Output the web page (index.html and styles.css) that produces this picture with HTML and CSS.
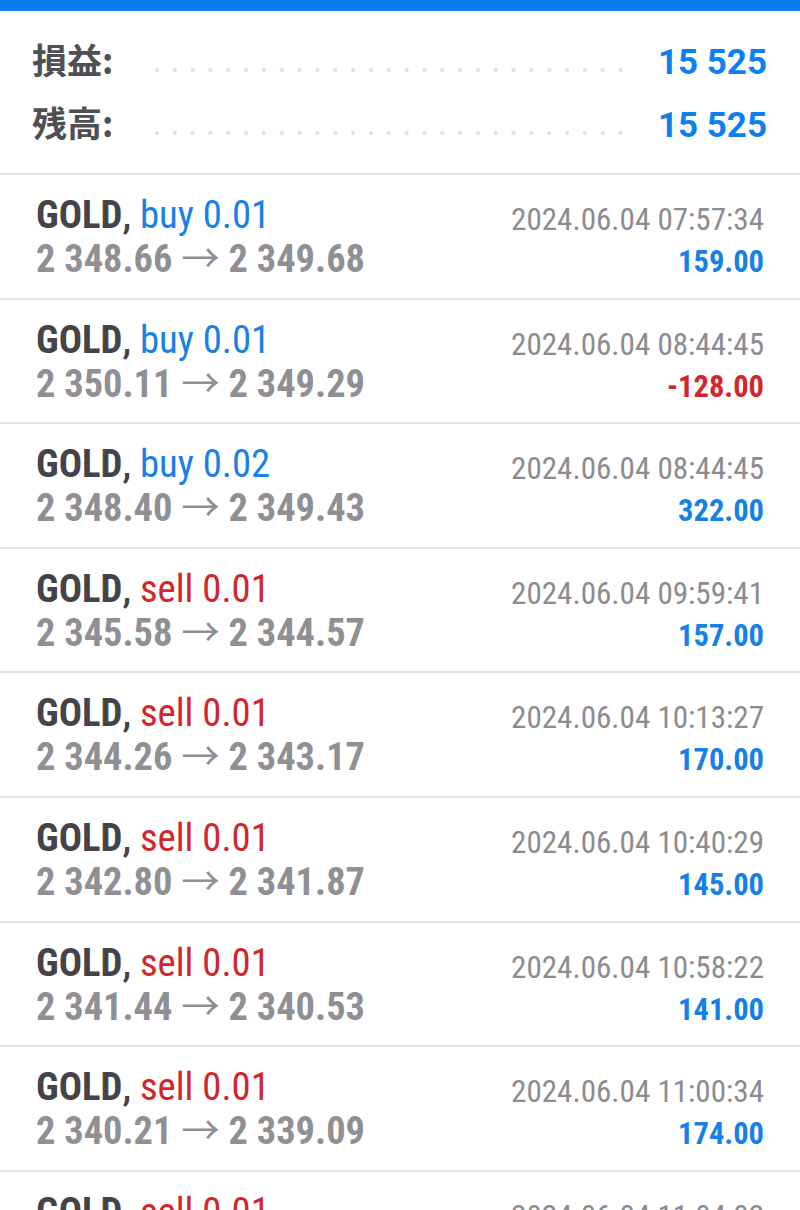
FILE: index.html
```html
<!DOCTYPE html>
<html lang="ja">
<head>
<meta charset="utf-8">
<link rel="stylesheet" href="styles.css">
</head>
<body>
<div class="topbar"></div>
<section class="summary">
  <div class="sum-row">
    <span class="sum-label">損益:</span>
    <span class="leader"></span>
    <span class="sum-value">15 525</span>
  </div>
  <div class="sum-row">
    <span class="sum-label">残高:</span>
    <span class="leader"></span>
    <span class="sum-value">15 525</span>
  </div>
</section>
<ul class="deals">
  <li class="deal">
    <div class="left">
      <div class="title"><span class="sym">GOLD</span><span class="comma">,</span> <span class="buy">buy 0.01</span></div>
      <div class="price">2 348.66 <span class="arrow">→</span> 2 349.68</div>
    </div>
    <div class="right">
      <div class="time">2024.06.04 07:57:34</div>
      <div class="profit">159.00</div>
    </div>
  </li>
  <li class="deal">
    <div class="left">
      <div class="title"><span class="sym">GOLD</span><span class="comma">,</span> <span class="buy">buy 0.01</span></div>
      <div class="price">2 350.11 <span class="arrow">→</span> 2 349.29</div>
    </div>
    <div class="right">
      <div class="time">2024.06.04 08:44:45</div>
      <div class="profit loss">-128.00</div>
    </div>
  </li>
  <li class="deal">
    <div class="left">
      <div class="title"><span class="sym">GOLD</span><span class="comma">,</span> <span class="buy">buy 0.02</span></div>
      <div class="price">2 348.40 <span class="arrow">→</span> 2 349.43</div>
    </div>
    <div class="right">
      <div class="time">2024.06.04 08:44:45</div>
      <div class="profit">322.00</div>
    </div>
  </li>
  <li class="deal">
    <div class="left">
      <div class="title"><span class="sym">GOLD</span><span class="comma">,</span> <span class="sell">sell 0.01</span></div>
      <div class="price">2 345.58 <span class="arrow">→</span> 2 344.57</div>
    </div>
    <div class="right">
      <div class="time">2024.06.04 09:59:41</div>
      <div class="profit">157.00</div>
    </div>
  </li>
  <li class="deal">
    <div class="left">
      <div class="title"><span class="sym">GOLD</span><span class="comma">,</span> <span class="sell">sell 0.01</span></div>
      <div class="price">2 344.26 <span class="arrow">→</span> 2 343.17</div>
    </div>
    <div class="right">
      <div class="time">2024.06.04 10:13:27</div>
      <div class="profit">170.00</div>
    </div>
  </li>
  <li class="deal">
    <div class="left">
      <div class="title"><span class="sym">GOLD</span><span class="comma">,</span> <span class="sell">sell 0.01</span></div>
      <div class="price">2 342.80 <span class="arrow">→</span> 2 341.87</div>
    </div>
    <div class="right">
      <div class="time">2024.06.04 10:40:29</div>
      <div class="profit">145.00</div>
    </div>
  </li>
  <li class="deal">
    <div class="left">
      <div class="title"><span class="sym">GOLD</span><span class="comma">,</span> <span class="sell">sell 0.01</span></div>
      <div class="price">2 341.44 <span class="arrow">→</span> 2 340.53</div>
    </div>
    <div class="right">
      <div class="time">2024.06.04 10:58:22</div>
      <div class="profit">141.00</div>
    </div>
  </li>
  <li class="deal">
    <div class="left">
      <div class="title"><span class="sym">GOLD</span><span class="comma">,</span> <span class="sell">sell 0.01</span></div>
      <div class="price">2 340.21 <span class="arrow">→</span> 2 339.09</div>
    </div>
    <div class="right">
      <div class="time">2024.06.04 11:00:34</div>
      <div class="profit">174.00</div>
    </div>
  </li>
  <li class="deal">
    <div class="left">
      <div class="title"><span class="sym">GOLD</span><span class="comma">,</span> <span class="sell">sell 0.01</span></div>
      <div class="price">2 339.12 <span class="arrow">→</span> 2 338.05</div>
    </div>
    <div class="right">
      <div class="time">2024.06.04 11:04:02</div>
      <div class="profit">166.00</div>
    </div>
  </li>
</ul>
</body>
</html>
```
FILE: styles.css
```css
html, body {
  margin: 0;
  padding: 0;
  background: #ffffff;
  height: 1210px;
  overflow: hidden;
}
body {
  font-family: "Roboto Condensed", Roboto, "Noto Sans CJK JP", sans-serif;
}
.topbar {
  height: 11px;
  background: #0a7cf0;
}
.summary {
  padding: 16px 33px 20px 32px;
  border-bottom: 2px solid #e4e4e6;
}
.sum-row {
  display: flex;
  align-items: baseline;
  height: 63px;
  line-height: 63px;
}
.sum-label {
  font-family: "Noto Sans CJK JP", sans-serif;
  font-size: 35px;
  font-weight: 700;
  color: #505054;
  line-height: 63px;
}
.leader {
  flex: 1;
  height: 6px;
  margin: 0 35px 0 42px;
  background-image: radial-gradient(circle at 2px 2px, #e2e2e4 1.9px, transparent 2.3px);
  background-size: 17.83px 6px;
  background-repeat: repeat-x;
}
.sum-value {
  font-family: Roboto, sans-serif;
  font-size: 35px;
  font-weight: 700;
  color: #0d7ff0;
  line-height: 63px;
}
.deals {
  list-style: none;
  margin: 0;
  padding: 0;
}
.deal {
  box-sizing: border-box;
  height: 124.6px;
  border-bottom: 2px solid #e4e4e6;
  padding: 18px 36px 0 36px;
  display: flex;
  justify-content: space-between;
  align-items: flex-start;
}
.left > div {
  line-height: 44px;
  white-space: nowrap;
}
.title {
  font-size: 38.7px;
}
.sym {
  color: #434348;
  font-weight: 700;
}
.comma {
  color: #434348;
  font-weight: 500;
}
.buy {
  color: #1a7fe6;
  font-weight: 400;
}
.sell {
  color: #d2262c;
  font-weight: 400;
}
.price {
  font-size: 38.4px;
  color: #8f8f94;
  font-weight: 700;
}
.arrow {
  font-weight: 400;
}
.right {
  text-align: right;
}
.time {
  font-size: 31.1px;
  line-height: 53px;
  color: #8c8c90;
  font-weight: 400;
  white-space: nowrap;
}
.profit {
  font-size: 30.5px;
  line-height: 31px;
  font-weight: 700;
  color: #1581e8;
}
.profit.loss {
  color: #d2262c;
}
```
